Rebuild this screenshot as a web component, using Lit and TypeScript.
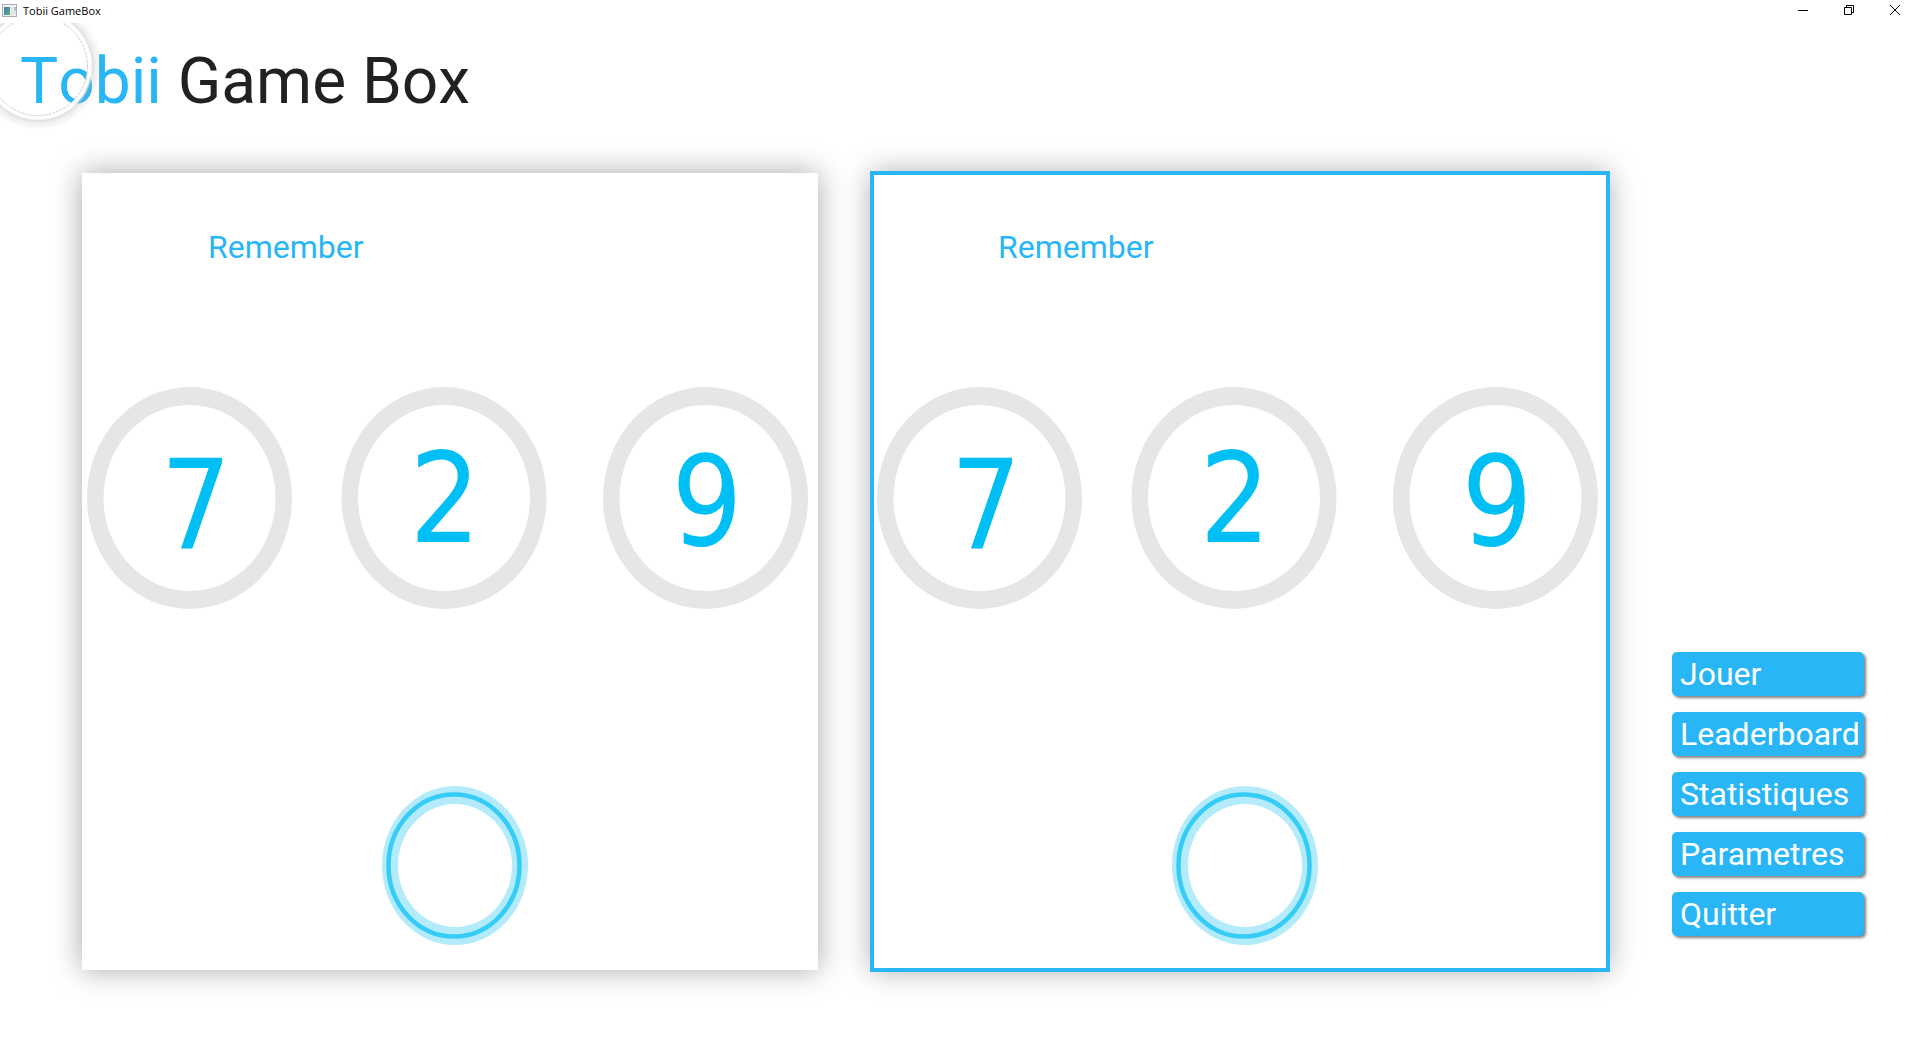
import { LitElement, css, html, svg } from "lit";
import { customElement, property, state } from "lit/decorators.js";
import { classMap } from "lit/directives/class-map.js";

interface Token {
  digit: string;
  ringX: number;
  x: number;
  baseline: number;
}

const TOKENS: Token[] = [
  { digit: "7", ringX: 107.5, x: 114, baseline: 376 },
  { digit: "2", ringX: 362, x: 363, baseline: 369 },
  { digit: "9", ringX: 623.5, x: 625, baseline: 372 },
];

const MENU = ["Jouer", "Leaderboard", "Statistiques", "Parametres", "Quitter"];

/* Title bar with the application name and the window controls. */
@customElement("window-bar")
export class WindowBar extends LitElement {
  static styles = css`
    :host {
      display: flex;
      align-items: flex-start;
      height: 22px;
      padding: 1px 2px 0;
      background: #fff;
      color: #000;
      font: 11px/20px "Open Sans", "Noto Sans", sans-serif;
    }
    .name {
      flex: 1;
      margin-left: 5px;
    }
    .control {
      display: grid;
      place-items: center;
      width: 46px;
      height: 18px;
      padding: 0;
      border: 0;
      background: none;
    }
    .glyph {
      display: block;
      width: 10px;
      height: 10px;
      fill: none;
      stroke: #000;
    }
    .icon {
      display: block;
      width: 16px;
      height: 18px;
    }
  `;

  render() {
    return html`
      <svg class="icon" viewBox="0 0 16 18" aria-hidden="true">
        <defs>
          <linearGradient id="pane" x1="0" y1="0" x2="1" y2="1">
            <stop offset="0" stop-color="#4579a8" />
            <stop offset="1" stop-color="#55b086" />
          </linearGradient>
        </defs>
        <rect x="0.5" y="3.5" width="14" height="12" fill="#f3f3f3" stroke="#a9adb1" />
        <rect x="2" y="6" width="6" height="8" fill="url(#pane)" />
        <rect x="9" y="6" width="2" height="8" fill="#dfe2e4" />
        <rect x="12" y="6" width="2" height="4" fill="#a5cfc0" />
        <rect x="12" y="10" width="2" height="4" fill="#e4e6e8" />
      </svg>
      <span class="name">Tobii GameBox</span>
      <button class="control" aria-label="Minimize">
        <svg class="glyph" viewBox="0 0 10 10"><path d="M0 5.5H10" /></svg>
      </button>
      <button class="control" aria-label="Restore">
        <svg class="glyph" viewBox="0 0 10 10">
          <path d="M0.5 2.5H7.5V9.5H0.5ZM2.5 2.5V0.5H9.5V7.5H7.5" />
        </svg>
      </button>
      <button class="control" aria-label="Close">
        <svg class="glyph" viewBox="0 0 10 10"><path d="M0 0L10 10M10 0L0 10" /></svg>
      </button>
    `;
  }
}

/* One game preview: three numbered rings and a gaze target. */
@customElement("game-board")
export class GameBoard extends LitElement {
  @property() heading = "";
  @property({ type: Boolean }) selected = false;

  static styles = css`
    :host {
      display: block;
    }
    .board {
      display: grid;
      box-sizing: border-box;
      background: #fff;
      box-shadow: 0 0 28px rgba(0, 0, 0, 0.35);
    }
    .selected {
      outline: 4px solid #29b6f6;
      outline-offset: -2px;
    }
    .heading,
    .scene {
      grid-area: 1 / 1;
    }
    .heading {
      margin: 0;
      padding: 54px 0 0 126px;
      color: #29b6f6;
      font: 400 32px/40px Roboto, sans-serif;
      z-index: 1;
    }
    .scene {
      display: block;
      width: 100%;
    }
    .ring {
      fill: #e6e6e6;
    }
    .hole {
      fill: #fff;
    }
    .digit {
      fill: #00bff5;
      font: 400 124px "DejaVu Sans Condensed", "Open Sans", sans-serif;
      text-anchor: middle;
    }
    .halo {
      fill: #b3ebfb;
    }
    .target {
      fill: none;
      stroke: #35cdf7;
      stroke-width: 4.5;
    }
  `;

  render() {
    return html`
      <section class=${classMap({ board: true, selected: this.selected })}>
        <h2 class="heading">${this.heading}</h2>
        <svg class="scene" viewBox="0 0 736 797">
          ${TOKENS.map(
            (t) => svg`
              <ellipse class="ring" cx=${t.ringX} cy="325" rx="102.5" ry="111" />
              <ellipse class="hole" cx=${t.ringX} cy="325" rx="86" ry="93" />
              <text class="digit" x=${t.x} y=${t.baseline}>${t.digit}</text>
            `,
          )}
          <ellipse class="halo" cx="373" cy="692.5" rx="73" ry="79.5" />
          <ellipse class="hole" cx="373" cy="692.5" rx="57" ry="61.5" />
          <ellipse class="target" cx="372" cy="692.5" rx="65.5" ry="71" />
        </svg>
      </section>
    `;
  }
}

@customElement("app-root")
export class AppRoot extends LitElement {
  @state() private selected = 1;

  static styles = css`
    :host {
      display: block;
      min-height: 100vh;
      background: #fff;
      font-family: Roboto, sans-serif;
    }
    .page {
      position: relative;
      overflow: hidden;
      padding-bottom: 70px;
    }
    .title {
      margin: 0;
      padding: 21px 20px 53px;
      color: #212121;
      font-size: 64px;
      font-weight: 400;
      font-kerning: none;
      line-height: 76px;
    }
    .brand {
      color: #29b6f6;
    }
    .gaze {
      position: absolute;
      top: -27px;
      left: -32px;
      width: 140px;
      height: 140px;
      pointer-events: none;
    }
    .content {
      display: grid;
      grid-template-columns: 1fr 1fr auto;
      gap: 54px;
      padding: 0 56px 0 82px;
    }
    .menu {
      display: flex;
      flex-direction: column;
      justify-content: flex-end;
      gap: 16px;
      width: 192px;
      padding: 0 0 34px 10px;
    }
    .entry {
      height: 44px;
      padding: 0 8px;
      border: 0;
      border-radius: 5px;
      background: #29b6f6;
      box-shadow: 2px 2px 3px rgba(0, 0, 0, 0.5);
      color: #fff;
      font: 400 32px/44px Roboto, sans-serif;
      text-align: left;
      white-space: nowrap;
    }
  `;

  render() {
    return html`
      <window-bar></window-bar>
      <main class="page">
        <h1 class="title"><span class="brand">Tobii</span> Game Box</h1>
        <div class="content">
          ${[0, 1].map(
            (i) => html`<game-board
              heading="Remember"
              ?selected=${this.selected === i}
              @click=${() => (this.selected = i)}
            ></game-board>`,
          )}
          <nav class="menu">
            ${MENU.map((label) => html`<button class="entry">${label}</button>`)}
          </nav>
        </div>
        <svg class="gaze" viewBox="0 0 140 140" aria-hidden="true">
          <defs>
            <radialGradient id="rim" gradientUnits="userSpaceOnUse" cx="70" cy="70" r="64">
              <stop offset="0.77" stop-color="#fff" stop-opacity="0.9" />
              <stop offset="0.8" stop-color="#fff" />
              <stop offset="0.83" stop-color="#fff" stop-opacity="0.9" />
              <stop offset="0.88" stop-color="#999" stop-opacity="0.18" />
              <stop offset="1" stop-color="#999" stop-opacity="0" />
            </radialGradient>
          </defs>
          <circle cx="70" cy="70" r="56.5" fill="none" stroke="url(#rim)" stroke-width="14" />
          <circle
            cx="70"
            cy="70"
            r="49.5"
            fill="none"
            stroke="#cfcfcf"
            stroke-dasharray="3 1"
          />
        </svg>
      </main>
    `;
  }
}
